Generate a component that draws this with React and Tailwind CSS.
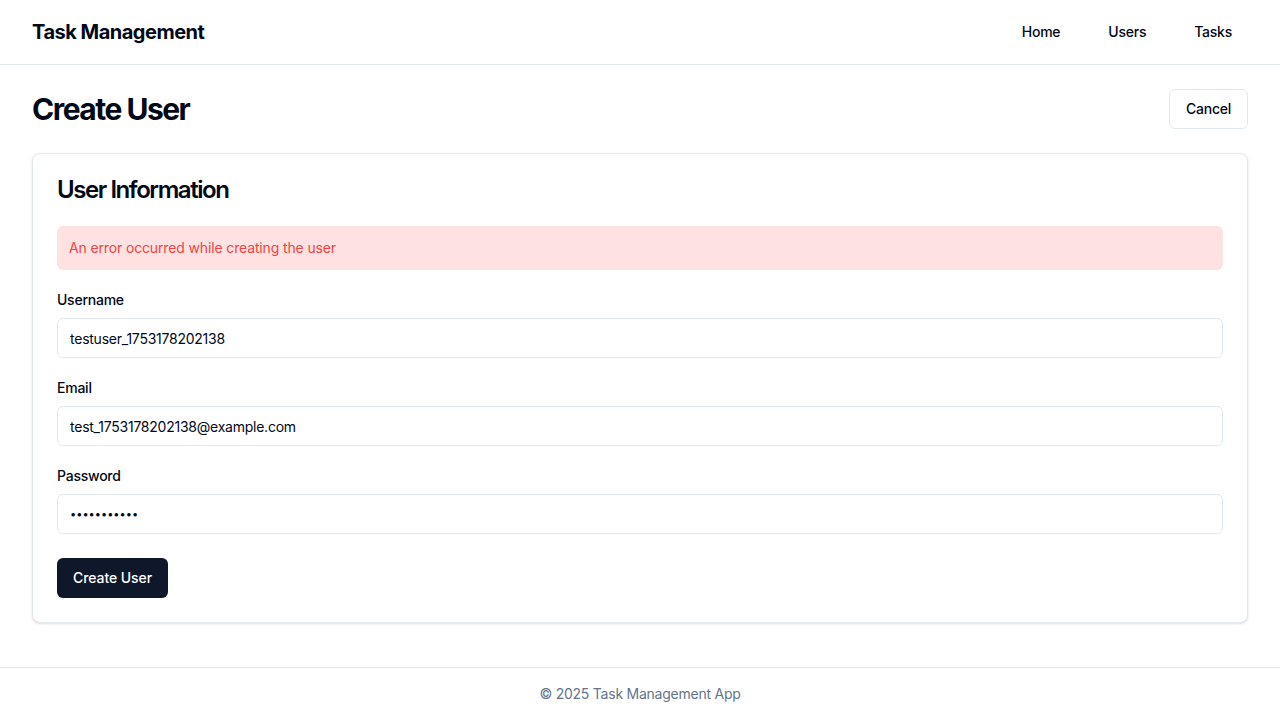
const NavLink = ({ children }) => (
  <a className="px-4 py-2 rounded-md text-sm font-medium text-[#020817] cursor-pointer">
    {children}
  </a>
);

const Field = ({ label, type = "text", value, inputClass = "text-sm" }) => (
  <div className="flex flex-col gap-2">
    <label className="text-sm font-medium text-[#020817] leading-5">{label}</label>
    <input
      type={type}
      defaultValue={value}
      className={`h-10 w-full rounded-md border border-[#e2e8f0] bg-white px-3 text-[#020817] outline-none ${inputClass}`}
    />
  </div>
);

export default function App() {
  return (
    <div className="min-h-screen flex flex-col bg-white font-['Inter',sans-serif] tracking-[-0.015em] text-[#020817]">
      {/* Header */}
      <header className="h-[65px] border-b border-[#e2e8f0] px-8 flex items-center justify-between">
        <h1 className="text-xl font-bold tracking-[-0.025em]">Task Management</h1>
        <nav className="flex items-center gap-4">
          <NavLink>Home</NavLink>
          <NavLink>Users</NavLink>
          <NavLink>Tasks</NavLink>
        </nav>
      </header>

      {/* Main */}
      <main className="flex-1 px-8 py-6">
        <div className="flex items-center justify-between mb-6">
          <h2 className="text-3xl font-bold tracking-[-0.05em]">Create User</h2>
          <button className="h-10 px-4 rounded-md border border-[#e2e8f0] bg-white text-sm font-medium">
            Cancel
          </button>
        </div>

        <div className="rounded-lg border border-[#e2e8f0] bg-white shadow-sm">
          <div className="p-6">
            <h3 className="text-2xl font-semibold leading-none tracking-[-0.06em]">User Information</h3>
          </div>
          <div className="px-6 pb-6 flex flex-col gap-5">
            <div className="p-3 rounded-md bg-[#fee2e2] text-sm text-[#ef4444] tracking-[-0.01em]">
              An error occurred while creating the user
            </div>
            <Field label="Username" value="testuser_1753178202138" />
            <Field label="Email" type="email" value="test_1753178202138@example.com" />
            <Field label="Password" type="password" value="Password123" inputClass="text-[11px] tracking-normal" />
            <div className="pt-1">
              <button className="h-10 px-4 rounded-md bg-[#0f172a] text-white text-sm font-medium tracking-[-0.005em]">
                Create User
              </button>
            </div>
          </div>
        </div>
      </main>

      {/* Footer */}
      <footer className="border-t border-[#e2e8f0] py-4 text-center text-sm text-[#64748b]">
        © 2025 Task Management App
      </footer>
    </div>
  );
}
